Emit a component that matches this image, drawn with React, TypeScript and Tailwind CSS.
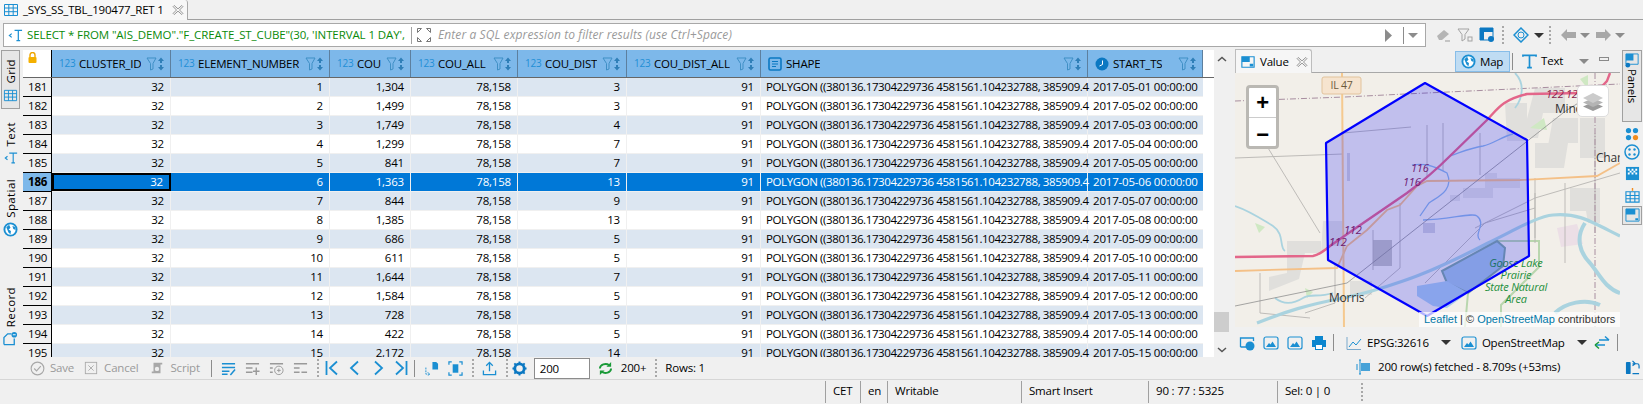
import type { ReactNode } from 'react';

const BLUE = '#1b8fd2';
const GREY = '#a3a3a3';

const rows = [
  [181, 1, '1,304', 3],
  [182, 2, '1,499', 3],
  [183, 3, '1,749', 4],
  [184, 4, '1,299', 7],
  [185, 5, '841', 7],
  [186, 6, '1,363', 13],
  [187, 7, '844', 9],
  [188, 8, '1,385', 13],
  [189, 9, '686', 5],
  [190, 10, '611', 5],
  [191, 11, '1,644', 7],
  [192, 12, '1,584', 5],
  [193, 13, '728', 5],
  [194, 14, '422', 5],
  [195, 15, '2,172', 14],
] as const;

// Small wrapper so every toolbar icon shares one 16 unit grid
function Ico({ size = 16, children, className }: { size?: number; children: ReactNode; className?: string }) {
  return (
    <svg width={size} height={size} viewBox="0 0 16 16" fill="none" className={`shrink-0 ${className ?? ''}`}>
      {children}
    </svg>
  );
}

function GridIcon({ size = 16 }: { size?: number }) {
  return (
    <Ico size={size}>
      <path d="M1.500 2.500h13v11h-13zM1.500 6h13M1.500 9.700h13M5.800 2.500v11M10.200 2.500v11" stroke={BLUE} />
    </Ico>
  );
}

function CloseIcon() {
  return (
    <Ico size={12}>
      <path d="M3 2l5 4.500L13 2l1.500 1.500L10 8l4.500 4.500L13 14l-5-4.500L3 14l-1.500-1.500L6 8 1.500 3.500z" stroke="#8a8a8a" strokeWidth="1.200" />
    </Ico>
  );
}

function Caret({ color = '#555' }: { color?: string }) {
  return <div className="w-0 h-0 border-x-[5px] border-x-transparent border-t-[5px]" style={{ borderTopColor: color }} />;
}

function Dots() {
  return (
    <div className="flex flex-col gap-[2px] w-[2px] shrink-0">
      {[0, 1, 2, 3, 4].map((i) => (
        <div key={i} className="w-[2px] h-[2px] bg-[#a8a8a8]" />
      ))}
    </div>
  );
}

function Sep() {
  return <div className="w-px h-[17px] bg-[#8c8c8c] shrink-0" />;
}

function Globe({ size = 16 }: { size?: number }) {
  return (
    <Ico size={size}>
      <circle cx="8" cy="8" r="6.500" fill="#fff" stroke={BLUE} strokeWidth="2" />
      <path d="M3.500 5.500l3-2.500 1.500 3-2 2 2.500 1.500-.5 3.500-2-1.500zM10 4l3 1.500.5 3-2.500-1z" fill={BLUE} />
    </Ico>
  );
}

function ImageIcon() {
  return (
    <Ico>
      <rect x="1" y="2" width="14" height="12" rx="2" stroke={BLUE} strokeWidth="1.200" />
      <path d="M3 12l3-4 1.500 1.500L9.500 6.500 13 12z" fill={BLUE} />
    </Ico>
  );
}

function TypeIcon({ kind }: { kind: 'num' | 'text' | 'time' }) {
  if (kind === 'num') return <span className="text-[10px] text-[#1f8fd6] w-[20px] shrink-0">123</span>;
  if (kind === 'text') {
    return (
      <svg width="14" height="14" viewBox="0 0 14 14" className="shrink-0 mr-[4px]">
        <rect x="1" y="1" width="12" height="12" rx="1.500" fill="none" stroke="#0b78c2" strokeWidth="1.600" />
        <path d="M4 4.500h6M4 7h6M4 9.500h4" stroke="#0b78c2" strokeWidth="1.200" />
      </svg>
    );
  }
  return (
    <svg width="14" height="14" viewBox="0 0 14 14" className="shrink-0 mr-[4px]">
      <circle cx="7" cy="7" r="6.500" fill="#0b78c2" />
      <path d="M7.500 3.500v4L4.500 9" stroke="#fff" fill="none" />
    </svg>
  );
}

function HeaderCell({ name, kind, w }: { name: string; kind: 'num' | 'text' | 'time'; w: string }) {
  return (
    <div className={`${w} shrink-0 h-full flex items-center pl-[7px] pr-[3px] border-r border-r-[#5d7f9e]`}>
      <TypeIcon kind={kind} />
      <span className="truncate">{name}</span>
      <svg width="21" height="14" viewBox="0 0 21 14" className="ml-auto shrink-0">
        <path d="M1 1h9L7 6.500V12L4.500 13V6.500z" fill="none" stroke="#3f8fc5" />
        <path d="M15 .500l3 3.500h-2v2h-2V4h-2zM15 13.500l-3-3.500h2V8h2v2h2z" fill="#2f7fb8" />
      </svg>
    </div>
  );
}

function TableHeader() {
  return (
    <div className="flex h-[28px] border-b border-b-[#666]">
      <div className="w-[29px] shrink-0 border-r border-r-black pl-[5px] pt-[2px]">
        <svg width="9" height="12" viewBox="0 0 9 12">
          <path d="M2 5V3a2.500 2.500 0 015 0v2" fill="none" stroke="#eea500" strokeWidth="1.400" />
          <rect x="0.500" y="5" width="8" height="6" rx="1" fill="#f4b000" />
        </svg>
      </div>
      <div className="flex h-full bg-[#7db8ea]">
        <HeaderCell name="CLUSTER_ID" kind="num" w="w-[119px]" />
        <HeaderCell name="ELEMENT_NUMBER" kind="num" w="w-[159px]" />
        <HeaderCell name="COU" kind="num" w="w-[81px]" />
        <HeaderCell name="COU_ALL" kind="num" w="w-[107px]" />
        <HeaderCell name="COU_DIST" kind="num" w="w-[109px]" />
        <HeaderCell name="COU_DIST_ALL" kind="num" w="w-[134px]" />
        <HeaderCell name="SHAPE" kind="text" w="w-[327px]" />
        <HeaderCell name="START_TS" kind="time" w="w-[115px]" />
      </div>
    </div>
  );
}

function NumCell({ w, children }: { w: string; children: ReactNode }) {
  return <div className={`${w} shrink-0 h-full pr-[6px] text-right border-r border-r-[#f0f0f0]`}>{children}</div>;
}

function TableRow({ row, index }: { row: (typeof rows)[number]; index: number }) {
  const [num, element, cou, dist] = row;
  const selected = num === 186;
  const bg = selected ? 'bg-[#0078d7] text-white' : index % 2 === 0 ? 'bg-[#dce6f1] text-black' : 'bg-white text-black';
  const day = String(element).padStart(2, '0');
  return (
    <div className="flex h-[19px] leading-[18px]">
      <div
        className={`w-[29px] shrink-0 pl-[5px] border-r border-b border-r-black border-b-black ${
          selected ? 'bg-[#7db8ea] font-bold' : 'bg-[#f0f0f0]'
        }`}
      >
        {num}
      </div>
      <div className={`flex border-b border-b-[#f0f0f0] ${bg}`}>
        <div
          className={`w-[119px] shrink-0 h-full pr-[6px] text-right ${
            selected ? 'border-2 border-black leading-[14px]' : 'border-r border-r-[#f0f0f0]'
          }`}
        >
          32
        </div>
        <NumCell w="w-[159px]">{element}</NumCell>
        <NumCell w="w-[81px]">{cou}</NumCell>
        <NumCell w="w-[107px]">78,158</NumCell>
        <NumCell w="w-[109px]">{dist}</NumCell>
        <NumCell w="w-[134px]">91</NumCell>
        <div className="w-[327px] shrink-0 h-full pl-[5px] whitespace-nowrap tracking-[-0.4px] border-r border-r-[#f0f0f0]">
          POLYGON ((380136.17304229736 4581561.104232788, 385909.4
        </div>
        <div className="w-[115px] shrink-0 h-full pl-[5px] whitespace-nowrap">{`2017-05-${day} 00:00:00`}</div>
      </div>
    </div>
  );
}

function SideTab({ label, icon, h, active }: { label: string; icon: ReactNode; h: string; active?: boolean }) {
  return (
    <div
      className={`${h} w-[19px] flex flex-col items-center justify-end gap-[4px] ${
        active ? 'border border-[#a0a0a0] bg-[#e6e6e6] pb-[5px]' : 'pb-[3px]'
      }`}
    >
      <span className="[writing-mode:vertical-rl] rotate-180 leading-none tracking-[0.4px]">{label}</span>
      {icon}
    </div>
  );
}

function LeftSidebar() {
  return (
    <div className="w-[23px] shrink-0 flex flex-col pl-[1px]">
      <SideTab h="h-[59px]" active label="Grid" icon={<GridIcon size={15} />} />
      <SideTab
        h="h-[53px] mt-[6px]"
        label="Text"
        icon={
          <Ico size={14}>
            <path d="M6 2.500h9M10.500 2.500v11M8.500 13.500h4M4 6L1.500 8 4 10" stroke={BLUE} strokeWidth="1.300" />
          </Ico>
        }
      />
      <SideTab h="h-[68px] mt-[4px]" label="Spatial" icon={<Globe size={15} />} />
      <SideTab
        h="h-[64px] mt-[45px]"
        label="Record"
        icon={
          <Ico size={15}>
            <path d="M1 14.500V7l4-4h4M1 14.500h11V8" stroke={BLUE} strokeWidth="1.400" />
            <circle cx="12" cy="4" r="3" fill={BLUE} />
            <path d="M10.500 4h3" stroke="#fff" />
          </Ico>
        }
      />
    </div>
  );
}

function Scrollbar() {
  return (
    <div className="w-[15px] shrink-0 flex flex-col items-center bg-[#f0f0f0]">
      <svg width="10" height="6" viewBox="0 0 10 6" className="mt-[6px]">
        <path d="M1 5l4-3.500L9 5" fill="none" stroke="#555" strokeWidth="1.500" />
      </svg>
      <div className="w-full h-[20px] bg-[#cdcdcd] mt-[250px]" />
      <svg width="10" height="6" viewBox="0 0 10 6" className="mt-[15px]">
        <path d="M1 1l4 3.500L9 1" fill="none" stroke="#555" strokeWidth="1.500" />
      </svg>
    </div>
  );
}

function GridToolbar() {
  const off = '#a8a8a8';
  return (
    <div className="h-[22px] flex items-center whitespace-nowrap">
      <Ico size={15} className="ml-[30px]">
        <circle cx="8" cy="8" r="6.800" stroke={off} strokeWidth="1.200" />
        <path d="M4.500 8l2.500 2.500 4.500-5" stroke={off} strokeWidth="1.200" />
      </Ico>
      <span className="ml-[5px] text-[#9a9a9a]">Save</span>
      <Ico size={14} className="ml-[10px]">
        <rect x="1.500" y="1.500" width="13" height="13" stroke={off} />
        <path d="M5 5l6 6M11 5l-6 6" stroke={off} />
      </Ico>
      <span className="ml-[6px] text-[#9a9a9a]">Cancel</span>
      <Ico size={14} className="ml-[12px]">
        <path d="M4 2h10v2h-2v10H2v-2h2z" fill={off} />
        <circle cx="8" cy="9" r="2.500" fill="#eee" />
      </Ico>
      <span className="ml-[6px] text-[#9a9a9a]">Script</span>
      <div className="ml-[11px]"><Sep /></div>
      <Ico size={15} className="ml-[9px]">
        <path d="M1 3h14M1 7h14M1 11h8M1 14h6" stroke={BLUE} strokeWidth="1.600" />
        <path d="M15 9l-5 6" stroke={BLUE} strokeWidth="1.600" />
      </Ico>
      <Ico size={15} className="ml-[9px]">
        <path d="M1 3h14M1 7.500h7M1 12h7M12 7v8M8.500 11h7" stroke="#999" strokeWidth="1.500" />
      </Ico>
      <Ico size={15} className="ml-[9px]">
        <path d="M1 3h14M1 7.500h3M1 12h3" stroke="#999" strokeWidth="1.500" />
        <circle cx="10.500" cy="10" r="4.500" stroke="#999" />
        <path d="M8.500 10h4M10.500 8v4" stroke="#999" />
      </Ico>
      <Ico size={15} className="ml-[9px]">
        <path d="M1 3h14M1 7.500h6M1 12h6M9 12h6" stroke="#999" strokeWidth="1.500" />
      </Ico>
      <div className="ml-[9px]"><Dots /></div>
      <svg width="13" height="16" viewBox="0 0 13 16" className="ml-[6px]">
        <path d="M1.500 1v14M12 1.500L5 8l7 6.500" fill="none" stroke={BLUE} strokeWidth="1.800" />
      </svg>
      <svg width="10" height="16" viewBox="0 0 10 16" className="ml-[11px]">
        <path d="M9 1.500L2 8l7 6.500" fill="none" stroke={BLUE} strokeWidth="1.800" />
      </svg>
      <svg width="10" height="16" viewBox="0 0 10 16" className="ml-[15px]">
        <path d="M1 1.500L8 8l-7 6.500" fill="none" stroke={BLUE} strokeWidth="1.800" />
      </svg>
      <svg width="13" height="16" viewBox="0 0 13 16" className="ml-[11px]">
        <path d="M11.500 1v14M1 1.500L8 8l-7 6.500" fill="none" stroke={BLUE} strokeWidth="1.800" />
      </svg>
      <div className="ml-[6px]"><Sep /></div>
      <Ico size={15} className="ml-[9px]">
        <path d="M9 1h4l2 2v6H9z" fill={BLUE} />
        <path d="M2 7v7h4M4 12l2 2-2 2" stroke={BLUE} strokeDasharray="2 1" />
      </Ico>
      <Ico size={15} className="ml-[9px]">
        <path d="M1 4V1h3M12 1h3v3M15 12v3h-3M4 15H1v-3" stroke={BLUE} strokeWidth="1.300" />
        <rect x="5" y="3.500" width="6" height="9" fill={BLUE} />
      </Ico>
      <div className="ml-[9px]"><Dots /></div>
      <Ico size={15} className="ml-[8px]">
        <path d="M8 11V2M4.500 5L8 1.500 11.500 5M1.500 10v4.500h13V10" stroke={BLUE} strokeWidth="1.400" />
      </Ico>
      <div className="ml-[9px]"><Dots /></div>
      <Ico size={15} className="ml-[4px]">
        <circle cx="8" cy="8" r="5" stroke="#0b78c2" strokeWidth="3" />
        <path d="M8 .500v3M8 12.500v3M.500 8h3M12.500 8h3M2.500 2.500l2 2M11.500 11.500l2 2M13.500 2.500l-2 2M4.500 11.500l-2 2" stroke="#0b78c2" strokeWidth="2" />
      </Ico>
      <div className="ml-[7px] w-[56px] h-[21px] border border-[#8c8c8c] bg-white pl-[5px] leading-[19px]">200</div>
      <Ico size={15} className="ml-[8px]">
        <path d="M2 8a6 5 0 0110-3.500M14 8a6 5 0 01-10 3.500" stroke="#1a9a38" strokeWidth="2" />
        <path d="M14 1v5H9zM2 15v-5h5z" fill="#1a9a38" />
      </Ico>
      <span className="ml-[8px]">200+</span>
      <div className="ml-[9px]"><Dots /></div>
      <span className="ml-[8px]">Rows: 1</span>
    </div>
  );
}

function MapDrawing() {
  return (
    <svg width="385" height="254" viewBox="0 0 385 254" className="block">
      <rect width="385" height="254" fill="#f2efe9" />
      {/* towns */}
      <g fill="#e0dfdc">
        <path d="M88 148h20v25H92l-6 8zM52 168h34v12H70l-6 26-30 12v-14l18-4zM115 208h22v14h-22z" />
        <path d="M270 30h22v38h-20zM300 15h30v25h-22l-5 25h-16zM318 45h25v25h-10l-4 25h-20zM345 45h25v40h-25zM300 70h14v25h-14zM335 115h30v35h-12l-2-12h-16zM260 105h25v10h-25z" />
        <path d="M250 100h12v15h-12zM228 115h30v10h-30zM215 122h10v6h-10z" />
      </g>
      <path d="M138 167h19v26h-19z" fill="#c4c2be" />
      <path d="M188 150h12v10h-12zM112 80h3v28h-3z" fill="#cfcfd6" />
      <path d="M322 155l20-4 6 20-22 3z" fill="#ecdfe6" />
      <g fill="#cfe8c3">
        <path d="M20 150l10 4-6 6zM295 55l14-10 3 12zM345 6l8-4v14zM70 215l8 4-6 6z" />
      </g>
      {/* park */}
      <path d="M262 168h42v26l-38 38v22M233 220l-3 34" fill="none" stroke="#b9d6ae" strokeWidth="2" />
      {/* minor roads */}
      <g fill="none" stroke="#b8b6b2" strokeWidth="0.900">
        <path d="M30 70l55 90M0 85l108-4M108 60l68-6M192 52v52M208 50v48M245 60v42M165 130v65l-35 30M138 157v40M25 200v40l50 5M100 190v40l-30 10M240 155l60-30 85-25M300 120v50M190 210l60-60 50-15" />
        <path d="M300 105v60M330 110v80M360 60v100" />
      </g>
      <path d="M0 28l110-4 60-3 215-10M360 0v254" fill="none" stroke="#a88ea0" strokeWidth="1" strokeDasharray="6 2 1 2" />
      {/* water */}
      <g fill="none" stroke="#aad3df">
        <path d="M22 250c30-12 50-18 86-25 20-4 40-10 60-17 30-10 60-25 85-38 25-12 50-27 65-28 25-2 35 5 67 21" strokeWidth="3.200" />
        <path d="M350 150c-10 15-5 30 5 40 10 12 15 25 30 30M320 240c10-10 30-15 45-8" strokeWidth="4" />
        <path d="M0 133c15 5 25 12 38 20 12 8 6 22 12 25M40 225c10 8 20 5 28 0 8-5 15 0 30-5M280 0c10 10 8 25 0 35" strokeWidth="1.800" />
      </g>
      <g fill="none" stroke="#8fb7e2" strokeWidth="1.300">
        <path d="M177 92c12-2 20 0 35 8 8 18-12 25-18 30l-9 13M215 83c12-4 20-8 33-10 10-2 20-10 30-12M188 147c25 0 50-8 54-4 10 8-4 18 3 24" />
      </g>
      <path d="M207 198l55-30 8 7-2 18-35 27-21-10z" fill="#a6c6e0" stroke="#7fa8a2" strokeWidth="2" />
      <path d="M182 213l30-5 21 12-21 15-14-2-16-10z" fill="#accde8" />
      {/* highways */}
      <path d="M0 198l102-3 10-22 20-16 20-20 13-5 17-19 10-5 93-1 77-4 23-13" fill="none" stroke="#f4c087" strokeWidth="1.800" />
      <path d="M107 0l2 254" fill="none" stroke="#f5c98f" strokeWidth="2" />
      <path d="M0 184l78-1c6-1 11-5 17-10l23-16 54-37c16-12 30-24 43-37l37-36c10-10 14-20 40-26l56-1c10 0 18-4 24-12l3-8" fill="none" stroke="#e3668a" strokeWidth="2.400" />
      <path d="M0 233l112-23 216-170c4-3 12-8 22-14" fill="none" stroke="#8f8f8f" strokeWidth="0.800" />
      {/* labels */}
      <g fontFamily="'Open Sans', sans-serif" fontSize="11" fill="#8a1f4d" fontStyle="italic">
        <text x="176" y="99">116</text>
        <text x="168" y="113">116</text>
        <text x="109" y="161">112</text>
        <text x="94" y="173">112</text>
        <text x="311" y="25">122</text>
        <text x="331" y="25">122</text>
      </g>
      <g fontFamily="'Open Sans', sans-serif" fontSize="12" fill="#333">
        <text x="94" y="229">Morris</text>
        <text x="320" y="40">Minooka</text>
        <text x="361" y="89">Char</text>
      </g>
      <g fontFamily="'Open Sans', sans-serif" fontSize="11" fill="#1f8f3c" fontStyle="italic" textAnchor="middle">
        <text x="281" y="194">Goose Lake</text>
        <text x="281" y="206">Prairie</text>
        <text x="281" y="218">State Natural</text>
        <text x="281" y="230">Area</text>
      </g>
      {/* query polygon */}
      <path d="M190 10L292 67 294 183 192 243 93 187 91 70z" fill="#0000ff" fillOpacity="0.2" stroke="#0000ff" strokeWidth="2.200" strokeLinejoin="round" />
      {/* IL 47 shield */}
      <rect x="87" y="4" width="39" height="17" rx="2" fill="#f6e4cf" stroke="#e2c39c" />
      <text x="106.500" y="16" textAnchor="middle" fontFamily="'Open Sans', sans-serif" fontSize="10.500" fill="#6b5a3c">IL 47</text>
    </svg>
  );
}

function MapPane() {
  return (
    <div className="relative h-[257px] overflow-hidden">
      <MapDrawing />
      {/* leaflet zoom control */}
      <div className="absolute left-[11px] top-[12px] w-[33px] h-[64px] bg-white border-[3px] border-[#bab8b3] rounded-[4px] flex flex-col font-['Liberation_Sans',sans-serif] font-bold text-[22px] text-black">
        <div className="h-[30px] flex items-center justify-center border-b border-b-[#ccc]">+</div>
        <div className="flex-1 flex items-center justify-center">−</div>
      </div>
      {/* leaflet layers control */}
      <div className="absolute left-[342px] top-[12px] w-[32px] h-[32px] bg-white rounded-[5px] border border-[#ddd] flex items-center justify-center">
        <svg width="22" height="22" viewBox="0 0 22 22">
          <path d="M11 12l10 4.500-10 4.500-10-4.500z" fill="#9a9a9a" />
          <path d="M11 8l10 4.500-10 4.500-10-4.500z" fill="#b4b4b4" />
          <path d="M11 3l10 5-10 5L1 8z" fill="#cbcbcb" />
        </svg>
      </div>
      {/* attribution */}
      <div className="absolute left-[184px] top-[239px] w-[201px] h-[15px] bg-white/70 pl-[5px] font-['Liberation_Sans',sans-serif] text-[11px] tracking-normal leading-[15px] whitespace-nowrap text-[#333]">
        <span className="text-[#0078a8]">Leaflet</span> | © <span className="text-[#0078a8]">OpenStreetMap</span> contributors
      </div>
    </div>
  );
}

function ValuePanel() {
  return (
    <div className="w-[391px] shrink-0 pl-[6px] flex flex-col">
      <div className="h-[23px] flex items-end border-b border-b-[#a8a8a8] relative">
        <div className="w-[77px] h-[24px] -mb-px bg-[#f6f6f6] border border-[#bdbdbd] border-b-0 rounded-tr-[3px] flex items-center pl-[5px]">
          <Ico size={14}>
            <path d="M1 2h14v12H1z" stroke={BLUE} strokeWidth="1.300" />
            <path d="M1 2h9v6H1zM10 10h4v3h-4z" fill={BLUE} />
          </Ico>
          <span className="ml-[5px]">Value</span>
          <div className="ml-[7px]"><CloseIcon /></div>
        </div>
        <div className="ml-[143px] self-start mt-px w-[55px] h-[21px] bg-[#bfdcf3] border border-[#87bde8] flex items-center pl-[5px] gap-[4px]">
          <Globe size={15} />
          <span>Map</span>
        </div>
        <div className="ml-[2px] self-center"><Sep /></div>
        <div className="self-center flex items-center ml-[9px] gap-[4px]">
          <Ico size={15}>
            <path d="M1 3V1.500h14V3M8 1.500V14.500M5.500 14.500h5" stroke={BLUE} strokeWidth="1.800" />
          </Ico>
          <span>Text</span>
        </div>
        <div className="self-center ml-[16px] w-0 h-0 border-x-[5px] border-x-transparent border-t-[5px] border-t-[#8a8a8a]" />
        <div className="self-center ml-[10px] w-[10px] h-[4px] border border-[#8a8a8a] mb-[4px]" />
      </div>
      <MapPane />
      <div className="h-[25px] flex items-center whitespace-nowrap">
        <Ico className="ml-[4px]">
          <path d="M1.500 12V3h13v3M1.500 12H7" stroke={BLUE} strokeWidth="1.300" />
          <circle cx="11" cy="11" r="4.500" fill={BLUE} />
        </Ico>
        <div className="ml-[8px]"><ImageIcon /></div>
        <div className="ml-[8px]"><ImageIcon /></div>
        <Ico className="ml-[8px]">
          <path d="M4 1h8v4H4zM1 5h14v7H12v3H4v-3H1z" fill="#0b86cf" />
          <path d="M5 10h6v4H5z" fill="#fff" />
        </Ico>
        <div className="ml-[6px]"><Sep /></div>
        <Ico className="ml-[12px]">
          <path d="M1 2v12.500h14" stroke="#7aa9cc" />
          <path d="M3 12l4-5 3 3 5-6" stroke={BLUE} />
        </Ico>
        <span className="ml-[5px]">EPSG:32616</span>
        <div className="ml-[12px]"><Caret color="#333" /></div>
        <div className="ml-[10px]"><ImageIcon /></div>
        <span className="ml-[5px]">OpenStreetMap</span>
        <div className="ml-[12px]"><Caret color="#333" /></div>
        <Ico className="ml-[7px]">
          <path d="M5 5h10M11 1.500L15 5M1 10h10" stroke={BLUE} strokeWidth="1.500" />
          <path d="M1 10l4 3.500M1 10l4-3" stroke="#1a9a38" strokeWidth="1.500" />
        </Ico>
        <div className="ml-[7px]"><Sep /></div>
        <div className="ml-[5px] w-px h-[25px] bg-[#a9d0ee]" />
      </div>
      <div className="h-[24px] flex items-center pl-[121px] whitespace-nowrap">
        <svg width="15" height="16" viewBox="0 0 15 16">
          <path d="M5 1h-2M5 15H3M4 1v14" stroke={BLUE} />
          <rect x="5" y="4" width="9" height="8" fill={BLUE} fillOpacity="0.800" />
          <path d="M1 5v6" stroke={BLUE} />
        </svg>
        <span className="ml-[7px]">200 row(s) fetched - 8.709s (+53ms)</span>
      </div>
    </div>
  );
}

function PanelsBar() {
  return (
    <div className="flex-1 pl-[2px] flex flex-col">
      <div className="w-[20px] h-[72px] bg-[#e6e6e6] border border-[#a0a0a0] flex flex-col items-center pt-[2px] gap-[1px]">
        <Ico size={15}>
          <path d="M1 1h13v11H1z" stroke={BLUE} />
          <path d="M1 1h8v7H1z" fill={BLUE} />
          <circle cx="3" cy="13" r="2.500" fill="#0b78c2" />
        </Ico>
        <span className="[writing-mode:vertical-rl] leading-none">Panels</span>
      </div>
      <div className="w-[20px] flex flex-col items-center">
        <Ico size={14} className="mt-[5px]">
          <circle cx="4" cy="4" r="3" fill={BLUE} />
          <circle cx="12" cy="4" r="3" fill={BLUE} />
          <circle cx="4" cy="12" r="3" fill={BLUE} />
          <circle cx="12" cy="12" r="3" fill="#f28c1e" />
        </Ico>
        <Ico size={16} className="mt-[3px]">
          <circle cx="8" cy="8" r="7" stroke={BLUE} strokeWidth="1.500" />
          <circle cx="5.500" cy="5.500" r="1.200" fill={BLUE} />
          <circle cx="10.500" cy="5.500" r="1.200" fill={BLUE} />
          <circle cx="5.500" cy="10.500" r="1.200" fill={BLUE} />
          <circle cx="10.500" cy="10.500" r="1.200" fill={BLUE} />
        </Ico>
        <Ico size={15} className="mt-[6px]">
          <rect x="1" y="1" width="14" height="14" fill={BLUE} />
          <path d="M3 3h2v2H3zM7 3h2v2H7zM11 3h2v2h-2zM5 5h2v2H5zM9 5h2v2H9zM3 7h2v2H3zM7 7h2v2H7zM11 7h2v2h-2z" fill="#fff" />
        </Ico>
        <Ico size={15} className="mt-[7px]">
          <path d="M8 0v3" stroke="#f28c1e" strokeWidth="1.500" />
          <path d="M1 4h14v11H1zM1 8h14M1 11.500h14M5.500 4v11M10.500 4v11" stroke={BLUE} strokeWidth="1.200" />
        </Ico>
      </div>
      <div className="w-[20px] h-[19px] mt-[3px] bg-[#e6e6e6] border border-[#a0a0a0] flex items-center justify-center">
        <Ico size={15}>
          <path d="M1 1h14v13H1z" stroke={BLUE} />
          <path d="M1 1h10v6H1zM11 11h3v2h-3z" fill={BLUE} />
        </Ico>
      </div>
      <Ico size={15} className="ml-[3px] mt-auto mb-[4px]">
        <rect x="1" y="2" width="5" height="13" rx="1" fill="#0b78c2" />
        <path d="M8 1l3 3-3 2M8 4h5a2 2 0 012 2v3M8 14.500h7" stroke="#0b78c2" strokeWidth="1.300" />
      </Ico>
    </div>
  );
}

function StatusBar() {
  const cell = 'h-[22px] border-l border-l-[#a0a0a0] pl-[7px] leading-[20px] shrink-0';
  return (
    <div className="h-[25px] border-t border-t-[#d6d6d6] flex items-center pl-[825px] whitespace-nowrap">
      <div className={`${cell} w-[35px]`}>CET</div>
      <div className={`${cell} w-[27px]`}>en</div>
      <div className={`${cell} w-[134px]`}>Writable</div>
      <div className={`${cell} w-[127px]`}>Smart Insert</div>
      <div className={`${cell} w-[129px]`}>90 : 77 : 5325</div>
      <div className={`${cell} w-[84px]`}>Sel: 0 | 0</div>
      <Dots />
    </div>
  );
}

export default function App() {
  return (
    <div className="w-[1643px] h-[404px] overflow-hidden flex flex-col bg-[#f0f0f0] text-black text-[11.500px] tracking-[-0.2px] font-['Open_Sans',sans-serif]">
      {/* editor tab */}
      <div className="h-[20px] flex border-b border-b-[#a0a0a0]">
        <div className="w-[188px] h-[20px] bg-[#f7f7f7] border-r border-r-[#a8a8a8] rounded-tr-[3px] flex items-center pl-[3px]">
          <GridIcon />
          <span className="ml-[4px]">_SYS_SS_TBL_190477_RET 1</span>
          <div className="ml-[8px]"><CloseIcon /></div>
        </div>
      </div>

      {/* filter bar */}
      <div className="h-[30px] flex items-center pl-[3px]">
        <div className="w-[1423px] h-[24px] bg-white border border-[#a8a8a8] flex items-center whitespace-nowrap">
          <Ico size={15} className="ml-[4px]">
            <path d="M7 2.500h8M11 2.500v11M9 13.500h4M4 6L1.500 8 4 10" stroke={BLUE} strokeWidth="1.300" />
          </Ico>
          <span className="ml-[4px] w-[381px] tracking-[-0.1px] text-[#0a8a0a]">
            SELECT * FROM "AIS_DEMO"."F_CREATE_ST_CUBE"(30, 'INTERVAL 1 DAY',
          </span>
          <div className="w-px h-[17px] bg-[#a0a0a0] ml-[3px]" />
          <Ico size={16} className="ml-[4px]">
            <path d="M1.500 5.500v-4h4L1.500 5.500zM14.500 5.500v-4h-4zM1.500 10.500v4h4zM14.500 10.500v4h-4z" stroke="#777" />
          </Ico>
          <span className="ml-[6px] italic text-[12px] tracking-[0.1px] text-[#9a9a9a]">Enter a SQL expression to filter results (use Ctrl+Space)</span>
          <svg width="9" height="13" viewBox="0 0 9 13" className="ml-auto">
            <path d="M1 0l7 6.500L1 13z" fill="#8c8c8c" />
          </svg>
          <div className="w-px h-[17px] bg-[#8c8c8c] ml-[10px]" />
          <div className="ml-[4px] mr-[7px]"><Caret color="#8c8c8c" /></div>
        </div>
        <div className="ml-[9px] flex items-center">
          <Ico>
            <path d="M2 9l7-6 5 4-7 6H4z" fill="#b5b5b5" />
            <path d="M10 14h5" stroke="#999" />
          </Ico>
          <Ico className="ml-[6px]">
            <path d="M1 2h11L8 7.500V12l-3 2V7.500z" stroke={GREY} />
            <rect x="11" y="10" width="4" height="4" stroke={GREY} />
          </Ico>
          <Ico className="ml-[6px]">
            <path d="M1 1h13v12H1z" stroke="#0b78c2" />
            <path d="M1 1h13v4H1zM1 5h4v8H1z" fill="#0b78c2" />
            <circle cx="12" cy="12" r="3" fill="#0b78c2" />
          </Ico>
          <div className="ml-[7px]"><Dots /></div>
          <Ico className="ml-[9px]">
            <path d="M8 1l7 7-7 7-7-7z" stroke={BLUE} strokeWidth="1.500" />
            <path d="M5 8a3 3 0 016 0M11 8a3 3 0 01-6 0" stroke={BLUE} />
          </Ico>
          <div className="ml-[5px]"><Caret color="#333" /></div>
          <div className="ml-[5px]"><Dots /></div>
          <svg width="15" height="12" viewBox="0 0 15 12" className="ml-[10px]">
            <path d="M0 6l6-6v3h9v6H6v3z" fill="#a8a8a8" />
          </svg>
          <div className="ml-[4px]"><Caret color="#8c8c8c" /></div>
          <svg width="15" height="12" viewBox="0 0 15 12" className="ml-[6px]">
            <path d="M15 6L9 0v3H0v6h9v3z" fill="#a8a8a8" />
          </svg>
          <div className="ml-[4px]"><Caret color="#8c8c8c" /></div>
        </div>
      </div>

      {/* main area */}
      <div className="flex h-[329px]">
        <div className="w-[1229px] shrink-0 flex flex-col">
          <div className="h-[307px] flex">
            <LeftSidebar />
            <div className="w-[1191px] shrink-0 bg-white overflow-hidden">
              <TableHeader />
              {rows.map((row, i) => (
                <TableRow key={row[0]} row={row} index={i} />
              ))}
            </div>
            <Scrollbar />
          </div>
          <GridToolbar />
        </div>
        <ValuePanel />
        <PanelsBar />
      </div>

      <StatusBar />
    </div>
  );
}
